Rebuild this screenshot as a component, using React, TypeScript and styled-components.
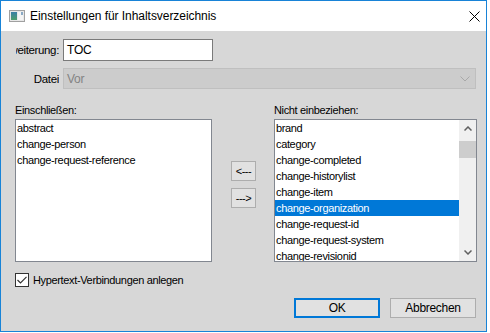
import React from "react";
import styled, { createGlobalStyle } from "styled-components";

const Global = createGlobalStyle`
  html, body { margin: 0; padding: 0; background: #ffffff; }
  body { font-family: "Liberation Sans", Arial, sans-serif; }
  * { box-sizing: border-box; }
`;

const Window = styled.div`
  width: 487px;
  height: 332px;
  border: 1px solid #1883d7;
  display: flex;
  flex-direction: column;
  background: #d7d7d7;
  overflow: hidden;
`;

const TitleBar = styled.div`
  height: 30px;
  flex: none;
  background: #ffffff;
  display: flex;
  align-items: center;
  padding-left: 8px;
  padding-right: 6px;
`;

const TitleText = styled.div`
  margin-left: 5px;
  font-family: "Liberation Sans", Arial, sans-serif;
  font-size: 12px;
  color: #000;
  flex: 1;
  letter-spacing: -0.05px;
`;

const CloseBtn = styled.div`
  width: 11px;
  height: 11px;
  display: flex;
  align-items: center;
  justify-content: center;
`;

const Body = styled.div`
  flex: 1;
  padding: 8px 10px 13px 14px;
  display: flex;
  flex-direction: column;
  font-size: 11px;
  color: #000;
  letter-spacing: -0.35px;
`;

const FieldRow = styled.div<{ $top: number; $h: number }>`
  margin-top: ${(p) => p.$top}px;
  height: ${(p) => p.$h}px;
  display: flex;
  align-items: center;
`;

const FieldLabel = styled.div`
  width: 43px;
  margin-left: 1px;
  margin-right: 4px;
  overflow: hidden;
  white-space: nowrap;
  display: flex;
  justify-content: flex-end;
  font-size: 11.5px;
`;

const TextInput = styled.div`
  width: 150px;
  height: 100%;
  background: #fff;
  border: 1px solid #7a7a7a;
  display: flex;
  align-items: center;
  padding-left: 3px;
  font-size: 12px;
  letter-spacing: -0.2px;
`;

const Combo = styled.div`
  width: 414px;
  height: 100%;
  background: #cccccc;
  border: 1px solid #bfbfbf;
  display: flex;
  align-items: center;
  padding-left: 3px;
  padding-right: 5px;
  color: #838383;
  font-size: 12px;
  letter-spacing: -0.2px;
`;

const ComboText = styled.div`
  flex: 1;
`;

const ListsArea = styled.div`
  margin-top: 15px;
  display: grid;
  grid-template-columns: 197px 19px 25px 18px 203px;
  grid-template-rows: 13px 143px;
  row-gap: 2px;
`;

const ColLabel = styled.div<{ $col: number }>`
  grid-column: ${(p) => p.$col};
  grid-row: 1;
  line-height: 13px;
  white-space: nowrap;
`;

const ListBox = styled.div<{ $col: number }>`
  grid-column: ${(p) => p.$col};
  grid-row: 2;
  background: #fff;
  border: 1px solid #828790;
  display: flex;
  overflow: hidden;
`;

const ListItems = styled.div`
  flex: 1;
  min-width: 0;
  display: flex;
  flex-direction: column;
`;

const Item = styled.div<{ $sel?: boolean }>`
  height: 16px;
  flex: none;
  line-height: 16px;
  padding-left: 1px;
  white-space: nowrap;
  background: ${(p) => (p.$sel ? "#0078d7" : "transparent")};
  color: ${(p) => (p.$sel ? "#fff" : "#000")};
`;

const ScrollBar = styled.div`
  width: 17px;
  flex: none;
  background: #f0f0f0;
  display: flex;
  flex-direction: column;
`;

const ScrollArrow = styled.div`
  height: 17px;
  flex: none;
  display: flex;
  align-items: center;
  justify-content: center;
`;

const Thumb = styled.div`
  height: 17px;
  margin: 4px 0 0 0;
  background: #cdcdcd;
`;

const ScrollTrack = styled.div`
  flex: 1;
`;

const MoveCol = styled.div`
  grid-column: 3;
  grid-row: 2;
  display: flex;
  flex-direction: column;
  padding-top: 42px;
  gap: 7px;
`;

const MoveBtn = styled.div`
  height: 20px;
  background: #e1e1e1;
  border: 1px solid #adadad;
  display: flex;
  align-items: center;
  justify-content: center;
  font-size: 11px;
  letter-spacing: -0.5px;
`;

const CheckRow = styled.div`
  margin-top: 11px;
  height: 14px;
  display: flex;
  align-items: center;
  gap: 4px;
  font-size: 11px;
`;

const CheckBox = styled.div`
  width: 14px;
  height: 14px;
  background: #fff;
  border: 1px solid #333;
  display: flex;
  align-items: center;
  justify-content: center;
`;

const ButtonRow = styled.div`
  margin-top: 11px;
  height: 20px;
  display: flex;
  justify-content: flex-end;
  gap: 10px;
`;

const DlgButton = styled.div<{ $def?: boolean }>`
  width: 86px;
  height: 20px;
  background: #e1e1e1;
  border: ${(p) => (p.$def ? "2px solid #0078d7" : "1px solid #adadad")};
  display: flex;
  align-items: center;
  justify-content: center;
  font-size: 12px;
  letter-spacing: -0.3px;
`;

const Chevron = ({ up, color = "#606060" }: { up?: boolean; color?: string }) => (
  <svg width="8" height="5" viewBox="0 0 8 5">
    <polyline
      points={up ? "0.5,4.5 4,1 7.5,4.5" : "0.5,0.5 4,4 7.5,0.5"}
      fill="none"
      stroke={color}
      strokeWidth="1.5"
    />
  </svg>
);

const AppIcon = () => (
  <svg width="16" height="12" viewBox="0 0 16 12">
    <defs>
      <linearGradient id="ig" x1="0" y1="0" x2="0" y2="1">
        <stop offset="0" stopColor="#3a7fa6" />
        <stop offset="1" stopColor="#4e9e6a" />
      </linearGradient>
    </defs>
    <rect x="0.5" y="0.5" width="15" height="11" fill="#e8e8e8" stroke="#a0a0a0" />
    <rect x="2" y="2" width="6" height="8" fill="url(#ig)" />
    <rect x="9" y="2" width="5" height="8" fill="#f4f4f4" />
    <rect x="12" y="2" width="2" height="3" fill="#8aa9c4" />
  </svg>
);

const excluded = [
  "brand",
  "category",
  "change-completed",
  "change-historylist",
  "change-item",
  "change-organization",
  "change-request-id",
  "change-request-system",
  "change-revisionid",
];

const included = ["abstract", "change-person", "change-request-reference"];

export default function App() {
  return (
    <>
      <Global />
      <Window>
        <TitleBar>
          <AppIcon />
          <TitleText>Einstellungen für Inhaltsverzeichnis</TitleText>
          <CloseBtn>
            <svg width="11" height="11" viewBox="0 0 11 11">
              <path d="M0.5 0.5 L10.5 10.5 M10.5 0.5 L0.5 10.5" stroke="#000" strokeWidth="1" />
            </svg>
          </CloseBtn>
        </TitleBar>
        <Body>
          <FieldRow $top={0} $h={22}>
            <FieldLabel>Erweiterung:</FieldLabel>
            <TextInput>TOC</TextInput>
          </FieldRow>
          <FieldRow $top={7} $h={21}>
            <FieldLabel>Datei</FieldLabel>
            <Combo>
              <ComboText>Vor</ComboText>
              <svg width="10" height="6" viewBox="0 0 10 6">
                <polyline points="0.5,0.5 5,5 9.5,0.5" fill="none" stroke="#a8a8a8" strokeWidth="1" />
              </svg>
            </Combo>
          </FieldRow>
          <ListsArea>
            <ColLabel $col={1}>Einschließen:</ColLabel>
            <ColLabel $col={5}>Nicht einbeziehen:</ColLabel>
            <ListBox $col={1}>
              <ListItems>
                {included.map((t) => (
                  <Item key={t}>{t}</Item>
                ))}
              </ListItems>
            </ListBox>
            <MoveCol>
              <MoveBtn>&lt;---</MoveBtn>
              <MoveBtn>---&gt;</MoveBtn>
            </MoveCol>
            <ListBox $col={5}>
              <ListItems>
                {excluded.map((t) => (
                  <Item key={t} $sel={t === "change-organization"}>
                    {t}
                  </Item>
                ))}
              </ListItems>
              <ScrollBar>
                <ScrollArrow>
                  <Chevron up />
                </ScrollArrow>
                <Thumb />
                <ScrollTrack />
                <ScrollArrow>
                  <Chevron />
                </ScrollArrow>
              </ScrollBar>
            </ListBox>
          </ListsArea>
          <CheckRow>
            <CheckBox>
              <svg width="10" height="8" viewBox="0 0 10 8">
                <polyline points="0.5,4 3.5,7 9.5,0.8" fill="none" stroke="#333" strokeWidth="1.2" />
              </svg>
            </CheckBox>
            Hypertext-Verbindungen anlegen
          </CheckRow>
          <ButtonRow>
            <DlgButton $def>OK</DlgButton>
            <DlgButton>Abbrechen</DlgButton>
          </ButtonRow>
        </Body>
      </Window>
    </>
  );
}
